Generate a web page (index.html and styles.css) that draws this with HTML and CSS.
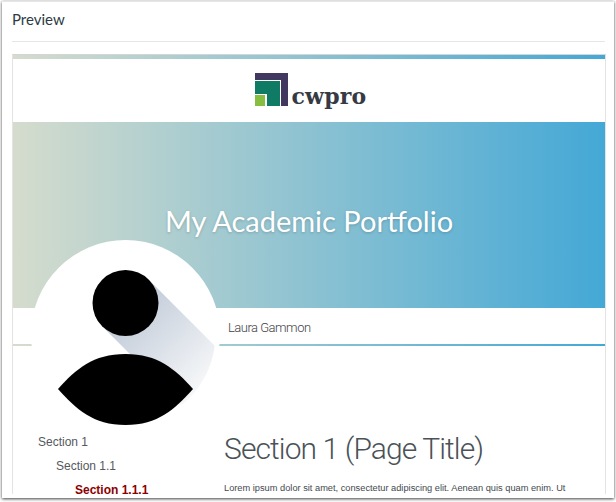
FILE: index.html
```html
<!DOCTYPE html>
<html lang="en">
<head>
  <meta charset="UTF-8">
  <title>Preview</title>
  <link rel="stylesheet" href="styles.css">
</head>
<body>
  <div class="window">
    <div class="window-title">Preview</div>

    <div class="frame">
      <div class="stripe"></div>

      <div class="logo-band">
        <svg class="logo-mark" width="33" height="33" viewBox="0 0 33 33">
          <rect width="33" height="33" fill="#41375f"/>
          <rect y="7" width="26" height="26" fill="#fff"/>
          <rect y="8" width="25" height="25" fill="#0f7b65"/>
          <rect y="21" width="12" height="12" fill="#fff"/>
          <rect y="22" width="10" height="11" fill="#86bf3f"/>
        </svg>
        <span class="logo-text">cwpro</span>
      </div>

      <div class="hero">
        <h1>My Academic Portfolio</h1>
      </div>

      <div class="name-bar">Laura Gammon</div>

      <div class="page">
        <ul class="side-nav">
          <li>Section 1</li>
          <li class="level-2">Section 1.1</li>
          <li class="level-3">Section 1.1.1</li>
        </ul>
        <div class="page-body">
          <h2>Section 1 (Page Title)</h2>
          <p>Lorem ipsum dolor sit amet, consectetur adipiscing elit. Aenean quis quam enim. Ut</p>
        </div>
      </div>

      <!-- Avatar sits over hero and name bar -->
      <svg class="avatar" width="190" height="190" viewBox="0 0 190 190">
        <defs>
          <linearGradient id="beam" gradientUnits="userSpaceOnUse" x1="95" y1="65" x2="175" y2="145">
            <stop offset="0" stop-color="#c0cad8"/>
            <stop offset="1" stop-color="#f7f8f9"/>
          </linearGradient>
          <clipPath id="disc"><circle cx="94.500" cy="94.500" r="90"/></clipPath>
        </defs>
        <circle cx="94.500" cy="94.500" r="94.500" fill="#fff"/>
        <polygon points="117.800,39.700 267.800,189.700 221.200,236.300 71.200,86.300" fill="url(#beam)" clip-path="url(#disc)"/>
        <circle cx="94.500" cy="63" r="33" fill="#000"/>
        <path d="M27 149 C45 129 62 114 94.500 114 C127 114 144 129 162 149 C144 169 127 185 94.500 185 C62 185 45 169 27 149 Z" fill="#000"/>
      </svg>
    </div>
  </div>
</body>
</html>
```

FILE: styles.css
```css
/* General Styling */
html, body {
  margin: 0;
  padding: 0;
  height: 100%;
  overflow: hidden;
  background: #fff;
}

body {
  font-family: "Liberation Sans", Arial, sans-serif;
}

.window {
  margin: 1px 2px 0 2px;
  height: 497px;
  padding: 0 8px 0 10px;
  box-sizing: border-box;
  background: #fff;
  border-top: 1px solid #e6e6e6;
  box-shadow: 0 1px 3px rgba(0, 0, 0, 0.75);
}

.window-title {
  height: 39px;
  margin-right: 1px;
  line-height: 34px;
  font-family: Lato, sans-serif;
  font-size: 15px;
  color: #2d3b45;
  border-bottom: 1px solid #e6e6e6;
}

.frame {
  position: relative;
  margin-top: 12px;
  height: 439px;
  background: #fff;
  border-right: 1px solid #e3e3e3;
  border-left: 1px solid #e3e3e3;
  border-top: 1px solid #d5d5d5;
}

.stripe {
  height: 4px;
  background: linear-gradient(90deg, #d5dccd, #44a8d6);
}

/* Logo */
.logo-band {
  height: 63px;
  display: flex;
  justify-content: center;
  align-items: center;
  gap: 4px;
  padding-left: 3px;
  padding-bottom: 2px;
  box-sizing: border-box;
}

.logo-text {
  margin-top: 12px;
  font-family: "DejaVu Serif", serif;
  font-weight: 700;
  font-size: 22px;
  letter-spacing: 0.2px;
  color: #363a45;
}

/* Hero */
.hero {
  height: 186px;
  display: flex;
  justify-content: center;
  align-items: center;
  background: linear-gradient(90deg, #d5dccd, #44a8d6);
}

.hero h1 {
  margin: 10px 0 0 0;
  font-family: Lato, sans-serif;
  font-weight: 400;
  font-size: 29px;
  color: #fff;
  text-shadow: 0 1px 3px rgba(0, 0, 0, 0.2);
}

.name-bar {
  height: 38px;
  box-sizing: border-box;
  line-height: 40px;
  padding-left: 215px;
  font-family: Roboto, sans-serif;
  font-weight: 300;
  font-size: 13px;
  letter-spacing: -0.5px;
  color: #3f4347;
  background: linear-gradient(90deg, #d5dccd, #44a8d6) left bottom / 100% 2px no-repeat;
}

/* Page content */
.page {
  display: flex;
}

.side-nav {
  width: 211px;
  flex-shrink: 0;
  margin: 0;
  padding: 84px 0 0 25px;
  box-sizing: border-box;
  list-style: none;
  font-size: 12px;
  color: #55595d;
}

.side-nav li {
  height: 24px;
  line-height: 24px;
}

.side-nav .level-2 {
  padding-left: 18px;
}

.side-nav .level-3 {
  padding-left: 37px;
  font-weight: 700;
  color: #8b0000;
}

.page-body h2 {
  margin: 85px 0 0 0;
  font-family: Roboto, sans-serif;
  font-weight: 300;
  font-size: 30px;
  letter-spacing: -0.9px;
  color: #4a5258;
}

.page-body p {
  margin: 17px 0 0 0;
  font-size: 9.250px;
  white-space: nowrap;
  color: #44494e;
}

.avatar {
  position: absolute;
  left: 18px;
  top: 185px;
}

.logo-mark {
  flex-shrink: 0;
}
```
